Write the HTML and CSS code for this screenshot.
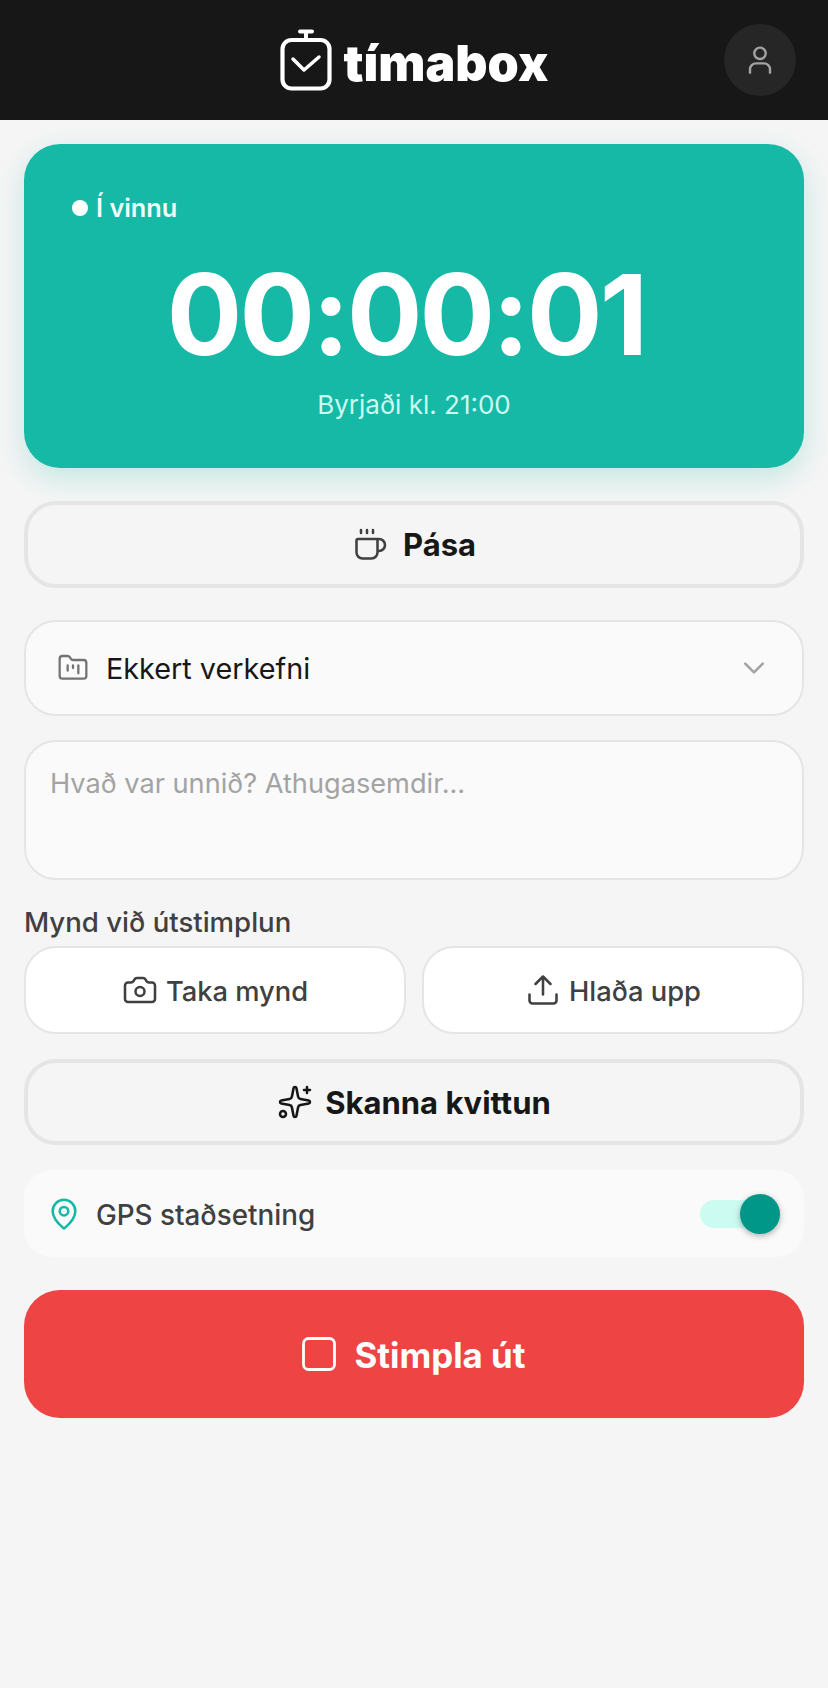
FILE: index.html
```html
<!DOCTYPE html>
<html>
<head>
  <meta charset="utf-8" />
  <meta name="viewport" content="width=device-width, initial-scale=1.0" />
  <title>tímabox</title>
  <link rel="stylesheet" href="styles.css">
</head>
<body>
  <header class="topbar">
    <div class="logo">
      <svg class="logo-icon" viewBox="0 0 52 62" fill="none" stroke="#fff" stroke-linecap="round" stroke-linejoin="round">
        <path d="M20 2.500h12M26 2.500v8" stroke-width="4"/>
        <rect x="2.500" y="11" width="47" height="48.500" rx="9" stroke-width="4.200"/>
        <path d="M13 30l11 11 15-13" stroke-width="3.500"/>
      </svg>
      <span class="logo-text">tímabox</span>
    </div>
    <button class="avatar" type="button">
      <svg viewBox="0 0 24 24" fill="none" stroke="#a3a3a3" stroke-width="1.800" stroke-linecap="round">
        <circle cx="12" cy="7" r="4.300"/>
        <path d="M4.500 21.500v-2.500a4.500 4.500 0 0 1 4.500-4.500h6a4.500 4.500 0 0 1 4.500 4.500v2.500"/>
      </svg>
    </button>
  </header>

  <main class="content">
    <!-- Timer -->
    <section class="timer-card">
      <div class="status"><span class="status-dot"></span>Í vinnu</div>
      <div class="clock">00:00:01</div>
      <div class="started">Byrjaði kl. 21:00</div>
    </section>

    <button class="btn-outline btn-pause" type="button">
      <svg class="icon-btn" viewBox="0 0 24 24" fill="none" stroke="#404040" stroke-width="1.700" stroke-linecap="round" stroke-linejoin="round">
        <path d="M10 2v2M14 2v2M6 2v2"/>
        <path d="M16 8a1 1 0 0 1 1 1v8a4 4 0 0 1-4 4H7a4 4 0 0 1-4-4V9a1 1 0 0 1 1-1h14a4 4 0 1 1 0 8h-1"/>
      </svg>
      <span>Pása</span>
    </button>

    <!-- Project -->
    <div class="project-select">
      <svg class="icon-project" viewBox="0 0 24 24" fill="none" stroke="#737373" stroke-width="1.700" stroke-linecap="round" stroke-linejoin="round">
        <path d="M4 20h16a2 2 0 0 0 2-2V8a2 2 0 0 0-2-2h-7.930a2 2 0 0 1-1.660-.900l-.820-1.200A2 2 0 0 0 7.930 3H4a2 2 0 0 0-2 2v13c0 1.100.900 2 2 2Z"/>
        <path d="M8 10v4M12 10v2M16 10v6"/>
      </svg>
      <span class="project-name">Ekkert verkefni</span>
      <svg class="icon-chevron" viewBox="0 0 24 24" fill="none" stroke="#a3a3a3" stroke-width="2" stroke-linecap="round" stroke-linejoin="round">
        <path d="M5 8.500l7 7 7-7"/>
      </svg>
    </div>

    <textarea class="notes" placeholder="Hvað var unnið? Athugasemdir..."></textarea>

    <!-- Photo -->
    <div class="photo-section">
      <div class="photo-label">Mynd við útstimplun</div>
      <div class="photo-actions">
        <button class="btn-photo" type="button">
          <svg class="icon-btn" viewBox="0 0 24 24" fill="none" stroke="#404040" stroke-width="1.700" stroke-linecap="round" stroke-linejoin="round">
            <path d="M13.997 4a2 2 0 0 1 1.760 1.050l.486.900A2 2 0 0 0 18.003 7H20a2 2 0 0 1 2 2v9a2 2 0 0 1-2 2H4a2 2 0 0 1-2-2V9a2 2 0 0 1 2-2h1.997a2 2 0 0 0 1.759-1.048l.489-.904A2 2 0 0 1 10.004 4z"/>
            <circle cx="12" cy="13" r="3"/>
          </svg>
          <span>Taka mynd</span>
        </button>
        <button class="btn-photo" type="button">
          <svg class="icon-btn" viewBox="0 0 24 24" fill="none" stroke="#404040" stroke-width="1.700" stroke-linecap="round" stroke-linejoin="round">
            <path d="M12 15V3M17 8l-5-5-5 5"/>
            <path d="M21 15v4a2 2 0 0 1-2 2H5a2 2 0 0 1-2-2v-4"/>
          </svg>
          <span>Hlaða upp</span>
        </button>
      </div>
    </div>

    <button class="btn-outline btn-scan" type="button">
      <svg class="icon-btn" viewBox="0 0 24 24" fill="none" stroke="#171717" stroke-width="1.700" stroke-linecap="round" stroke-linejoin="round">
        <path d="M11.017 2.814a1 1 0 0 1 1.966 0l1.051 5.558a2 2 0 0 0 1.594 1.594l5.558 1.051a1 1 0 0 1 0 1.966l-5.558 1.051a2 2 0 0 0-1.594 1.594l-1.051 5.558a1 1 0 0 1-1.966 0l-1.051-5.558a2 2 0 0 0-1.594-1.594l-5.558-1.051a1 1 0 0 1 0-1.966l5.558-1.051a2 2 0 0 0 1.594-1.594z"/>
        <path d="M20 2v4M22 4h-4"/>
        <circle cx="4" cy="20" r="2"/>
      </svg>
      <span>Skanna kvittun</span>
    </button>

    <!-- GPS -->
    <div class="gps-row">
      <svg class="icon-pin" viewBox="0 0 24 24" fill="none" stroke="#14b8a6" stroke-width="1.800" stroke-linecap="round" stroke-linejoin="round">
        <path d="M20 10c0 4.993-5.539 10.193-7.399 11.799a1 1 0 0 1-1.202 0C9.539 20.193 4 14.993 4 10a8 8 0 0 1 16 0"/>
        <circle cx="12" cy="10" r="3"/>
      </svg>
      <span class="gps-label">GPS staðsetning</span>
      <span class="toggle"><span class="toggle-thumb"></span></span>
    </div>

    <button class="btn-stop" type="button">
      <svg class="icon-stop" viewBox="0 0 34 34" fill="none" stroke="#fff" stroke-width="2.800">
        <rect x="1.500" y="1.500" width="31" height="31" rx="5"/>
      </svg>
      <span>Stimpla út</span>
    </button>
  </main>
</body>
</html>
```

FILE: styles.css
```css
* {
  box-sizing: border-box;
}

body {
  margin: 0;
  min-height: 1688px;
  background: #f5f5f5;
  color: #171717;
  font-family: Inter, "Liberation Sans", sans-serif;
}

button {
  font-family: inherit;
  cursor: pointer;
}

/* Top bar */
.topbar {
  position: relative;
  height: 120px;
  background: #171717;
  display: flex;
  align-items: center;
  justify-content: center;
}
.logo {
  display: flex;
  align-items: center;
  gap: 12px;
}
.logo-icon {
  width: 52px;
  height: 62px;
}
.logo-text {
  color: #fff;
  font-weight: 900;
  font-size: 50px;
  line-height: 50px;
  margin-top: 6px;
}
.avatar {
  position: absolute;
  right: 32px;
  top: 24px;
  width: 72px;
  height: 72px;
  border: 0;
  border-radius: 50%;
  background: #262626;
  padding: 20px;
  display: flex;
}
.avatar svg {
  width: 32px;
  height: 32px;
}

/* Page column */
.content {
  padding: 24px 24px 0;
  display: flex;
  flex-direction: column;
}

/* Timer card */
.timer-card {
  height: 324px;
  background: #16b8a6;
  border-radius: 36px;
  padding: 48px;
  box-shadow: 0 10px 30px rgba(20, 184, 166, 0.22);
  color: #fff;
}
.status {
  display: flex;
  align-items: center;
  gap: 8px;
  font-size: 25.300px;
  line-height: 32px;
  font-weight: 600;
  color: #f0fdfa;
}
.status-dot {
  width: 16px;
  height: 16px;
  border-radius: 50%;
  background: #fff;
}
.clock {
  margin-top: 30px;
  padding-right: 16px;
  text-align: center;
  font-size: 112px;
  line-height: 120px;
  font-weight: 700;
  letter-spacing: -0.025em;
}
.started {
  margin-top: 15px;
  text-align: center;
  font-size: 26px;
  line-height: 32px;
  color: #ccfbf1;
}

/* Outline buttons */
.btn-outline {
  height: 87px;
  border: 4px solid #e5e5e5;
  border-radius: 32px;
  background: #f5f5f5;
  color: #171717;
  font-size: 31px;
  font-weight: 700;
  display: flex;
  align-items: center;
  justify-content: center;
  gap: 15px;
}
.btn-pause {
  margin-top: 33px;
}
.btn-scan {
  margin-top: 25px;
  height: 86px;
  gap: 12px;
}
.icon-btn {
  width: 36px;
  height: 36px;
}

/* Project select */
.project-select {
  margin-top: 32px;
  height: 96px;
  border: 2px solid #e5e5e5;
  border-radius: 32px;
  background: #fafafa;
  padding: 0 33px 0 31px;
  display: flex;
  align-items: center;
}
.icon-project {
  width: 32px;
  height: 32px;
}
.project-name {
  margin-left: 17px;
  padding-top: 1px;
  flex: 1;
  font-size: 28.800px;
}
.icon-chevron {
  width: 30px;
  height: 30px;
}

/* Notes */
.notes {
  display: block;
  margin-top: 24px;
  width: 100%;
  height: 140px;
  border: 2px solid #e5e5e5;
  border-radius: 32px;
  background: #fafafa;
  padding: 26px 24px;
  font-family: inherit;
  font-size: 27.200px;
  line-height: 32px;
  resize: none;
  outline: none;
}
.notes::placeholder {
  color: #a3a3a3;
  opacity: 1;
}

/* Photo */
.photo-section {
  margin-top: 22px;
}
.photo-label {
  margin-bottom: 4px;
  font-size: 27.600px;
  line-height: 40px;
  font-weight: 500;
  color: #404040;
}
.photo-actions {
  display: flex;
  gap: 16px;
}
.btn-photo {
  flex: 1;
  height: 88px;
  border: 2px solid #e5e5e5;
  border-radius: 32px;
  background: #fff;
  color: #404040;
  font-size: 27.300px;
  font-weight: 500;
  display: flex;
  align-items: center;
  justify-content: center;
  gap: 8px;
}
.btn-photo span {
  padding-top: 3px;
}

/* GPS */
.gps-row {
  margin-top: 25px;
  height: 87px;
  border-radius: 28px;
  background: #fafafa;
  padding: 0 24px 0 23px;
  display: flex;
  align-items: center;
}
.icon-pin {
  width: 34px;
  height: 34px;
}
.gps-label {
  flex: 1;
  margin-left: 15px;
  padding-top: 3px;
  font-size: 27.800px;
  font-weight: 500;
  color: #404040;
}
.toggle {
  position: relative;
  width: 80px;
  height: 28px;
  border-radius: 14px;
  background: #ccfbf1;
}
.toggle-thumb {
  position: absolute;
  right: 0;
  top: -6px;
  width: 40px;
  height: 40px;
  border-radius: 50%;
  background: #009688;
  box-shadow: 0 2px 6px rgba(0, 0, 0, 0.3);
}

/* Stop */
.btn-stop {
  margin-top: 33px;
  height: 128px;
  border: 0;
  border-radius: 36px;
  background: #ef4444;
  color: #fff;
  font-size: 34.800px;
  font-weight: 700;
  display: flex;
  align-items: center;
  justify-content: center;
  gap: 19px;
  padding-left: 5px;
}
.btn-stop span {
  padding-top: 2px;
}
.icon-stop {
  width: 34px;
  height: 34px;
}
```
